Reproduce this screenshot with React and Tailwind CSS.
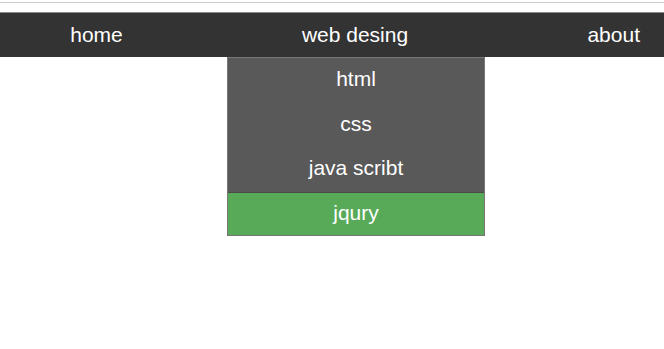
export default function App() {
  const items = ["html", "css", "java scribt"];
  return (
    <div className="min-h-screen bg-white font-['Liberation_Sans',Arial,sans-serif]">
      {/* barra superior */}
      <div className="h-[3px] border-b border-[#cfcfcf]" />
      <div className="h-[9px]" />

      <nav className="h-[45px] bg-[#333333] border-t border-[#8a8a8a] flex text-white text-[21px]">
        <div className="w-[193px] flex items-center justify-center pb-[1px]">home</div>
        <div className="w-[34px]" />
        <div className="w-[258px] relative flex items-center justify-center pb-[1px] pr-[2px]">
          web desing
          <ul className="absolute left-0 top-[44px] w-[258px] border border-[#777777] bg-[#595959]">
            {items.map((t) => (
              <li key={t} className="h-[44.5px] flex items-center justify-center pb-[3px]">
                {t}
              </li>
            ))}
            <li className="h-[43px] flex items-center justify-center pb-[2px] bg-[#58aa58] border-t border-[#4a4a4a]">
              jqury
            </li>
          </ul>
        </div>
        <div className="flex-1 flex items-center justify-end pr-[24px] pb-[1px]">about</div>
      </nav>
    </div>
  );
}
